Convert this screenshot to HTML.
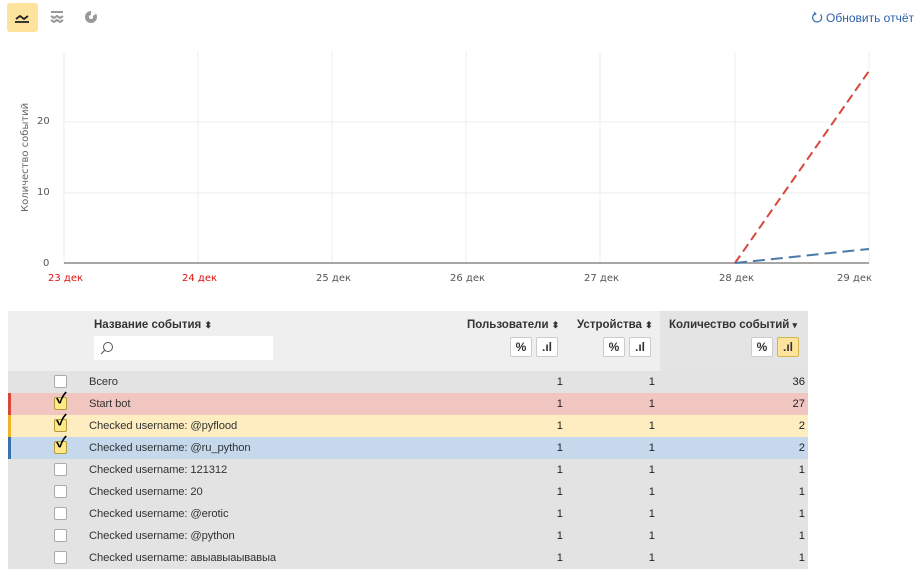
<!DOCTYPE html>
<html><head><meta charset="utf-8"><style>
body{margin:0;width:920px;height:578px;background:#fff;font-family:"Liberation Sans","Noto Sans CJK SC",sans-serif;position:relative;overflow:hidden;color:#222}
.a{position:absolute}
.t{font-size:12px}
.row{position:absolute;left:8px;width:800px;height:22px;font-size:11.2px;line-height:22px}
.row .n{position:absolute;left:81px;color:#333;letter-spacing:-0.1px}
.row .u{position:absolute;right:245px}
.row .d{position:absolute;right:153px}
.row .c{position:absolute;right:3px}
.cb{position:absolute;left:46px;top:4px;width:11px;height:11px;border:1px solid #aaa;border-radius:2px;background:#fff}
.cb.on{background:#fce98a;border-color:#b59a3a}
.ck{position:absolute;left:48px;top:-5px;font-size:15px;color:#000;font-weight:bold}
.bar{position:absolute;left:0;top:0;width:3px;height:22px}
.btn{position:absolute;width:20px;height:18px;border:1px solid #ccc;border-radius:2px;background:#fff;font-size:12px;text-align:center;line-height:18px;font-weight:bold;color:#333}
.h{font-size:11.5px;font-weight:bold;color:#333}
</style></head><body>
<div class="a" style="left:7px;top:3px;width:31px;height:29px;background:#fde39b;border-radius:3px"></div>
<svg class="a" style="left:0;top:0" width="120" height="36">
<path d="M16 19 l4-3 l4 3 l4-3" stroke="#222" stroke-width="1.8" fill="none"/><path d="M15 22 h14" stroke="#222" stroke-width="1.8"/>
<path d="M51 12 h12 M51 16 l3 2 l3-2 l3 2 l3-2 M51 20 l3 2 l3-2 l3 2 l3-2" stroke="#999" stroke-width="2" fill="none"/>
<circle cx="91" cy="17" r="6" fill="#999"/><path d="M91 17 L91 11 A6 6 0 0 1 96 14 Z" fill="#fff"/><circle cx="91" cy="17" r="2" fill="#fff"/>
</svg>
<svg class="a" style="left:811px;top:11px" width="13" height="13"><path d="M9.5 3.5 A4.5 4.5 0 1 1 4 2.5" stroke="#3b6eb0" stroke-width="1.2" fill="none"/><path d="M3 1 l2 2 l-2 1" stroke="#3b6eb0" fill="none"/></svg>
<div class="a t" style="left:826px;top:11px;color:#2e5fa8">Обновить отчёт</div>
<svg class="a" style="left:0;top:0" width="920" height="300">
<g stroke="#ececec" stroke-width="1">
<line x1="64" y1="52" x2="64" y2="263"/><line x1="198" y1="52" x2="198" y2="263"/><line x1="332" y1="52" x2="332" y2="263"/><line x1="466" y1="52" x2="466" y2="263"/><line x1="600" y1="52" x2="600" y2="263"/><line x1="735" y1="52" x2="735" y2="263"/><line x1="869" y1="52" x2="869" y2="263"/>
<line x1="64" y1="122" x2="869" y2="122"/><line x1="64" y1="193" x2="869" y2="193"/>
</g>
<line x1="64" y1="263" x2="869" y2="263" stroke="#888" stroke-width="1.5"/>
<line x1="735" y1="263" x2="869" y2="71" stroke="#d9473a" stroke-width="2" stroke-dasharray="9,5"/>
<line x1="735" y1="263" x2="869" y2="249" stroke="#4a7aa8" stroke-width="2" stroke-dasharray="12,6"/>
<g font-family="DejaVu Sans,sans-serif" font-size="10" fill="#555">
<text x="37" y="124">20</text><text x="37" y="195">10</text><text x="43" y="266">0</text>
<text x="48" y="281" fill="#d11">23 дек</text><text x="182" y="281" fill="#d11">24 дек</text><text x="316" y="281">25 дек</text><text x="450" y="281">26 дек</text><text x="584" y="281">27 дек</text><text x="719" y="281">28 дек</text><text x="837" y="281">29 дек</text>
<text transform="translate(28,212) rotate(-90)" fill="#666">Количество событий</text>
</g>
</svg>
<div class="a" style="left:8px;top:311px;width:800px;height:60px;background:#efefef"></div>
<div class="a" style="left:660px;top:311px;width:148px;height:60px;background:#e4e4e4"></div>
<div class="a h" style="left:94px;top:319px">Название события <span style="font-size:9px">⬍</span></div>
<div class="a" style="left:94px;top:336px;width:179px;height:24px;background:#fff"></div>
<svg class="a" style="left:100px;top:341px" width="14" height="14"><circle cx="8" cy="6" r="4.5" stroke="#555" fill="none"/><path d="M5 9 l-4 4" stroke="#555"/></svg>
<div class="a h" style="left:467px;top:319px">Пользователи <span style="font-size:9px">⬍</span></div>
<div class="a h" style="left:577px;top:319px">Устройства <span style="font-size:9px">⬍</span></div>
<div class="a h" style="left:669px;top:319px">Количество событий <span style="font-size:9px">▾</span></div>
<div class="btn" style="left:510px;top:337px">%</div><div class="btn" style="left:536px;top:337px">.ıl</div>
<div class="btn" style="left:603px;top:337px">%</div><div class="btn" style="left:629px;top:337px">.ıl</div>
<div class="btn" style="left:751px;top:337px">%</div><div class="btn" style="left:777px;top:337px;background:#fde39b;border-color:#d4b653">.ıl</div>

<div class="row" style="top:371px;background:#e3e3e3"><div class="cb"></div><span class="n">Всего</span><span class="u">1</span><span class="d">1</span><span class="c">36</span></div>
<div class="row" style="top:393px;background:#f2c6c0"><div class="bar" style="background:#d9473a"></div><div class="cb on"></div><span class="ck">✓</span><span class="n">Start bot</span><span class="u">1</span><span class="d">1</span><span class="c">27</span></div>
<div class="row" style="top:415px;background:#fdedc0"><div class="bar" style="background:#f2b52a"></div><div class="cb on"></div><span class="ck">✓</span><span class="n">Checked username: @pyflood</span><span class="u">1</span><span class="d">1</span><span class="c">2</span></div>
<div class="row" style="top:437px;background:#c6d8ec"><div class="bar" style="background:#3b6eb0"></div><div class="cb on"></div><span class="ck">✓</span><span class="n">Checked username: @ru_python</span><span class="u">1</span><span class="d">1</span><span class="c">2</span></div>
<div class="row" style="top:459px;background:#e3e3e3"><div class="cb"></div><span class="n">Checked username: 121312</span><span class="u">1</span><span class="d">1</span><span class="c">1</span></div>
<div class="row" style="top:481px;background:#e3e3e3"><div class="cb"></div><span class="n">Checked username: 20</span><span class="u">1</span><span class="d">1</span><span class="c">1</span></div>
<div class="row" style="top:503px;background:#e3e3e3"><div class="cb"></div><span class="n">Checked username: @erotic</span><span class="u">1</span><span class="d">1</span><span class="c">1</span></div>
<div class="row" style="top:525px;background:#e3e3e3"><div class="cb"></div><span class="n">Checked username: @python</span><span class="u">1</span><span class="d">1</span><span class="c">1</span></div>
<div class="row" style="top:547px;background:#e3e3e3"><div class="cb"></div><span class="n">Checked username: авыавыаывавыа</span><span class="u">1</span><span class="d">1</span><span class="c">1</span></div>
</body></html>
